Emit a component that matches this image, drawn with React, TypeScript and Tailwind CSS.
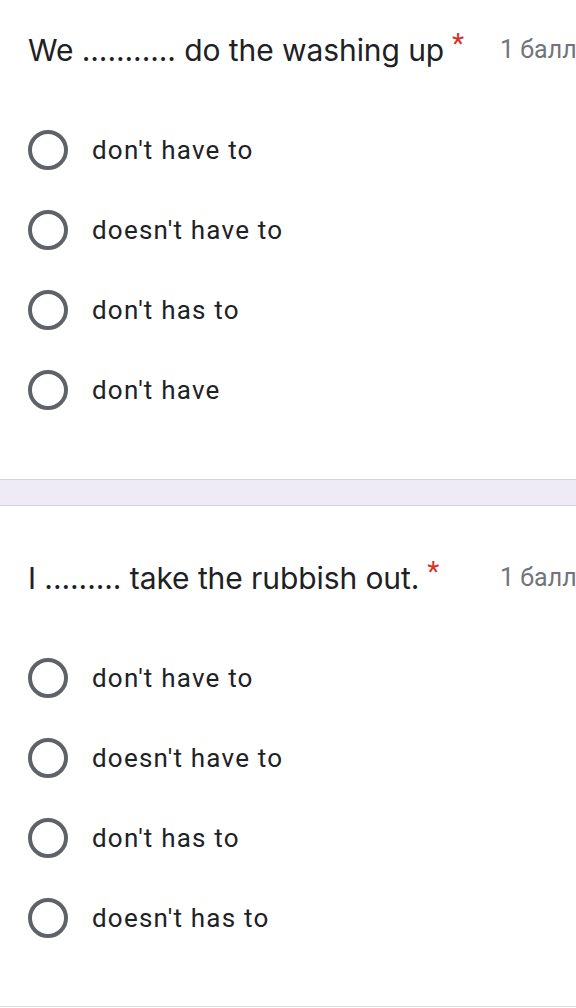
const questions = [
  {
    title: 'We ........... do the washing up',
    options: ["don't have to", "doesn't have to", "don't has to", "don't have"],
  },
  {
    title: 'I ......... take the rubbish out.',
    options: ["don't have to", "doesn't have to", "don't has to", "doesn't has to"],
  },
];

function Radio() {
  return <span className="block w-10 h-10 rounded-full border-4 border-[#5f6368] shrink-0" />;
}

function Question({ title, options }: { title: string; options: string[] }) {
  return (
    <div className="pl-7">
      <div className="flex items-center h-10 whitespace-nowrap">
        <span className="text-[30px] tracking-[-0.08px] text-[#202124] font-['Inter',sans-serif]">{title}</span>
        <span className="text-[28px] leading-none text-[#d93025] ml-[8px] font-['Roboto',sans-serif] self-start">*</span>
        <span className="ml-auto w-[76px] shrink-0 text-[25px] text-[#70757a] font-['Roboto',sans-serif]">1 балл</span>
      </div>
      <div className="mt-10">
        {options.map((o) => (
          <div key={o} className="flex items-center h-20 gap-6">
            <Radio />
            <span className="text-[26px] tracking-[1.2px] text-[#202124] font-['Roboto',sans-serif]">{o}</span>
          </div>
        ))}
      </div>
    </div>
  );
}

export default function App() {
  return (
    <div className="w-[576px] h-[1008px] bg-white overflow-hidden">
      <div className="pt-[30px] pb-[49px]">
        <Question {...questions[0]} />
      </div>
      <div className="h-[27px] bg-[#eeebf7] border-y border-[#d6d4da]" />
      <div className="pt-[52px] pb-[48px] border-b border-[#dcdcdc]">
        <Question {...questions[1]} />
      </div>
    </div>
  );
}
